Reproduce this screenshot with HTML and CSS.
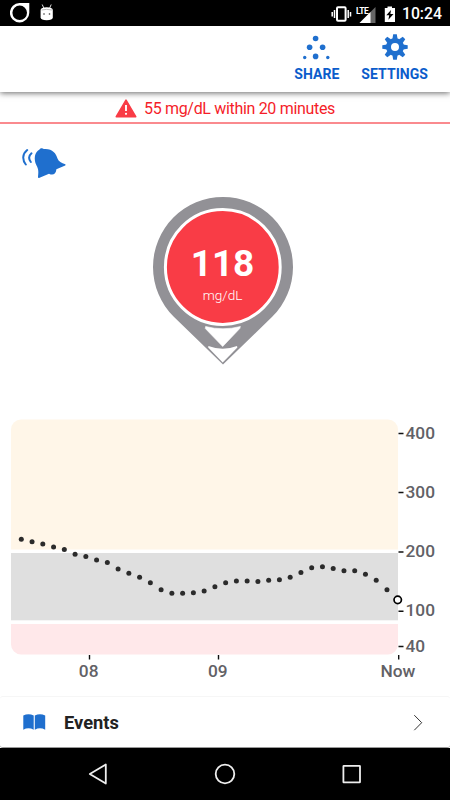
FILE: index.html
```html
<!DOCTYPE html>
<html lang="en">
<head>
  <title>Glucose Monitor</title>
  <meta charset="UTF-8" />
  <meta name="viewport" content="width=device-width, initial-scale=1" />
  <link rel="stylesheet" href="styles.css">
</head>
<body>
  <!-- Android status bar -->
  <div class="status-bar">
    <svg class="status-drop" width="20" height="20" viewBox="0 0 20 20">
      <path fill="#fff" fill-rule="evenodd" d="M9.8 0H19.3V9.7A9.7 9.7 0 1 1 9.8 0ZM9.7 2.5A7.3 7.3 0 1 0 9.7 17.1A7.3 7.3 0 1 0 9.7 2.5Z" />
    </svg>
    <svg class="status-droid" width="14" height="17" viewBox="0 0 14 17">
      <path d="M2.2 .5L3.8 4M11.2 .5L9.7 4" stroke="#ddd" stroke-width="1" />
      <path fill="#fff" d="M.6 6Q1 3.2 6.7 3.2T12.8 6V13.5Q12.5 16.2 6.7 16.2T.6 13.5Z" />
      <path d="M1.5 6Q6.7 4.7 12 6" fill="none" stroke="#bbb" stroke-width="1" />
      <circle cx="4" cy="10" r=".8" fill="#333" />
      <circle cx="9.5" cy="10" r=".8" fill="#333" />
    </svg>
    <div class="status-right">
      <svg width="21" height="16" viewBox="0 0 21 16">
        <rect x="6" y="1.2" width="8.6" height="13.6" rx="1" fill="none" stroke="#fff" stroke-width="2" />
        <path d="M3.5 4V12M17.2 4V12M1.2 6V10.5M19.5 6V10.5" stroke="#fff" stroke-width="1.5" />
      </svg>
      <svg class="signal" width="20" height="17" viewBox="0 0 20 17">
        <path fill="#666" d="M19.5 1V17H3.5Z" />
        <path fill="#fff" d="M14.5 6V17H3.5Z" />
        <path d="M0 0H11V9H0Z" />
        <text x="0" y="7.7">LTE</text>
      </svg>
      <svg class="battery" width="12" height="17" viewBox="0 0 12 17">
        <path fill="#fff" d="M3.5 .5H8V2H11V16H.8V2H3.5Z" />
        <path d="M7 4L2.3 9.3H5.2L4.4 13.7L9.5 8H6.4Z" />
      </svg>
      <span class="clock">10:24</span>
    </div>
  </div>

  <!-- Toolbar -->
  <header class="toolbar">
    <button class="tool share">
      <svg width="28" height="28" viewBox="0 0 28 28">
        <circle cx="12.6" cy="4.5" r="2.8" />
        <circle cx="6.6" cy="13.3" r="2.8" />
        <circle cx="19.6" cy="13.3" r="2.8" />
        <circle cx="12.6" cy="22.4" r="2.8" />
        <circle cx="1.7" cy="23.5" r="1.7" />
        <circle cx="24.8" cy="23.5" r="1.7" />
      </svg>
      SHARE
    </button>
    <button class="tool settings">
      <svg width="28" height="28" viewBox="-14 -13 28 28">
        <circle r="6.5" fill="none" stroke="#1f6fce" stroke-width="5" />
        <path id="tooth" d="M-2.6 -8L-1.8 -12.7H1.8L2.6 -8Z" />
        <use href="#tooth" transform="rotate(45)" />
        <use href="#tooth" transform="rotate(90)" />
        <use href="#tooth" transform="rotate(135)" />
        <use href="#tooth" transform="rotate(180)" />
        <use href="#tooth" transform="rotate(225)" />
        <use href="#tooth" transform="rotate(270)" />
        <use href="#tooth" transform="rotate(315)" />
      </svg>
      SETTINGS
    </button>
  </header>

  <div class="alert">
    <svg width="22" height="19" viewBox="0 0 22 19">
      <path fill="#f93c46" stroke="#f93c46" stroke-width="1.6" stroke-linejoin="round" d="M11 1.2L20.7 17.7H1.3Z" />
      <path d="M11 6V12" stroke="#fff" stroke-width="1.9" />
      <circle cx="11" cy="14.8" r="1.1" fill="#fff" />
    </svg>
    <span>55 mg/dL within 20 minutes</span>
  </div>

  <main class="reading">
    <svg class="bell" width="46" height="34" viewBox="0 0 46 34">
      <path fill="none" stroke="#1f6fce" stroke-width="2" stroke-linecap="round" d="M5.2 3C.2 7 .2 13 3.8 17.5M9.5 6.3C6.5 9 6.5 12 8.8 15" />
      <path fill="#1f6fce" d="M17.5 2.5C18.3 .8 20.8 .8 21.7 2C30 1.2 34 6 35.5 11.5C36.5 14.7 39.5 16 43.3 17.2Q44 18 43.2 18.6L34.4 22.3C34 26.8 31 29 27 26.7L17 31Q16 31.2 16 30C16.5 25.5 16.8 22.5 14.4 18.3C11.5 12 12.5 5 17.5 2.5Z" />
    </svg>

    <!-- Current value, pointer facing down -->
    <div class="pin">
      <svg width="140" height="168" viewBox="0 0 140 168">
        <path fill="#929196" d="M70 167.5L20.8 119.8A70 70 0 1 1 119.2 119.8Z" />
        <circle cx="69.8" cy="70" r="57.4" fill="#f93c46" stroke="#fff" stroke-width="3" />
        <path fill="#fff" d="M52.6 129.5Q70 134 87.4 129.5L86.8 131.5L69.7 149.5L52.3 131.5Z" stroke="#fff" stroke-width=".6" />
        <path fill="#fff" d="M55.4 149Q69.7 154.5 84 149L84.4 150.5L69.7 165.5L55.2 150.5Z" />
      </svg>
      <div class="pin-value">
        <strong>118</strong>
        <span>mg/dL</span>
      </div>
    </div>
  </main>

  <svg class="chart" width="450" height="286" viewBox="0 410 450 286">
    <path fill="#fff6e8" d="M11 549.5V429.5A10 10 0 0 1 21 419.5H388A10 10 0 0 1 398 429.5V549.5Z" />
    <rect x="11" y="553" width="387" height="67.3" fill="#dfdfdf" />
    <path fill="#ffe8ea" d="M11 624H398V644.5A10 10 0 0 1 388 654.5H21A10 10 0 0 1 11 644.5Z" />

    <path class="ticks" d="M398.5 433.5H403.5M398.5 492.5H403.5M398.5 552H403.5M398.5 611.3H403.5M398.5 646.5H403.5M89.5 655V659.5M218.5 655V659.5M398.7 655V659.5" />
    <g class="axis">
      <text x="405.5" y="438.5">400</text>
      <text x="405.5" y="497.5">300</text>
      <text x="405.5" y="556.7">200</text>
      <text x="405.5" y="616.2">100</text>
      <text x="405.5" y="651.5">40</text>
    </g>
    <g class="axis axis-time">
      <text x="88.7" y="677.3">08</text>
      <text x="217.8" y="677.3">09</text>
      <text x="398" y="677.3">Now</text>
    </g>
    <g id="points"></g>
  </svg>

  <a class="events">
    <svg width="23" height="17" viewBox="0 0 23 17">
      <path d="M.3 1.5Q5.5 -1 10.7 1.5V15.7Q5.5 13 .3 15.7ZM11.8 1.5Q17 -1 22.2 1.5V15.7Q17 13 11.8 15.7Z" fill="#1f6fce" />
    </svg>
    <span>Events</span>
    <svg class="chevron" width="10" height="18" viewBox="0 0 10 18">
      <path d="M1.3 2.2L8.7 9.7L1.3 17.2" fill="none" stroke="#333" stroke-width="1" />
    </svg>
  </a>

  <!-- Android navigation -->
  <nav class="nav-bar">
    <svg width="22" height="24" viewBox="0 0 22 24">
      <path d="M18.8 2.5V21.5L2.8 12Z" />
    </svg>
    <svg width="22" height="24" viewBox="0 0 22 24">
      <circle cx="11" cy="12" r="9.3" />
    </svg>
    <svg width="22" height="24" viewBox="0 0 22 24">
      <rect x="2.4" y="3.8" width="16.6" height="16.6" rx=".5" />
    </svg>
  </nav>

  <script>
    // One reading every five minutes, oldest first, in mg/dL
    const readings = [
      221, 217, 213, 208, 204, 196, 192, 186, 182, 171, 164, 157, 148, 136, 130,
      130, 131, 134, 141, 148, 151, 151, 150, 152, 153, 157, 165, 173, 175, 172,
      168, 168, 162, 152, 136, 119
    ];
    const points = document.getElementById('points');

    readings.forEach((value, i) => {
      const last = i === readings.length - 1;
      const dot = document.createElementNS('http://www.w3.org/2000/svg', 'circle');
      dot.setAttribute('cx', 21.3 + i * 10.755);
      dot.setAttribute('cy', 670.5 - value * 0.5935);
      dot.setAttribute('r', last ? 3.7 : 2.5);
      dot.setAttribute('class', last ? 'dot now' : 'dot');
      points.appendChild(dot);
    });
  </script>
</body>
</html>
```
FILE: styles.css
```css
* {
  box-sizing: border-box;
}

body {
  margin: 0;
  height: 800px;
  display: flex;
  flex-direction: column;
  overflow: hidden;
  background: #fff;
  font-family: Roboto, sans-serif;
}

svg {
  display: block;
  flex-shrink: 0;
}

.status-bar {
  height: 26px;
  flex-shrink: 0;
  display: flex;
  align-items: flex-start;
  background: #000;
  padding: 3px 8px 0 10px;
}

.status-droid {
  margin: 1px 0 0 10px;
}

.status-right {
  margin-left: auto;
  display: flex;
  align-items: center;
  padding-top: 2px;
}

.signal {
  margin-left: 4px;
}

.signal text {
  font-size: 8.5px;
  font-weight: 700;
  fill: #fff;
  letter-spacing: -0.5px;
}

.battery {
  margin-left: 8px;
}

.clock {
  margin-left: 6px;
  color: #fff;
  font-size: 15.8px;
  font-weight: 500;
  line-height: 18px;
}

.toolbar {
  position: relative;
  height: 66px;
  flex-shrink: 0;
  display: flex;
  justify-content: flex-end;
  gap: 22px;
  padding: 8px 22px 0 0;
  box-shadow: 0 1px 6px rgba(0, 0, 0, 0.6);
  clip-path: inset(0 0 -10px 0);
}

.tool {
  display: flex;
  flex-direction: column;
  align-items: center;
  gap: 4px;
  padding: 0;
  border: none;
  background: none;
  color: #0b5ccb;
  font: 700 14px/16px Roboto, sans-serif;
  letter-spacing: 0.05px;
}

.tool svg {
  fill: #1f6fce;
}

.alert {
  height: 32px;
  flex-shrink: 0;
  display: flex;
  align-items: center;
  justify-content: center;
  gap: 7px;
  padding-top: 3px;
  border-bottom: 2px solid #fa8a8e;
  color: #f51d29;
  font-size: 16px;
  letter-spacing: -0.32px;
}

.reading {
  height: 286px;
  flex-shrink: 0;
  display: flex;
  align-items: flex-start;
}

.bell {
  margin: 23px 0 0 22px;
}

.pin {
  position: relative;
  margin: 73px 0 0 84.5px;
}

.pin-value {
  position: absolute;
  top: 0;
  left: 0;
  width: 140px;
  padding-top: 46px;
  display: flex;
  flex-direction: column;
  align-items: center;
  color: #fff;
}

.pin-value strong {
  font-size: 37px;
  line-height: 42px;
}

.pin-value span {
  margin-top: 2px;
  font-size: 13.6px;
  font-weight: 300;
  line-height: 16px;
}

.ticks {
  stroke: #111;
  stroke-width: 1.4;
}

.axis {
  font-size: 17.3px;
  font-weight: 500;
  fill: #626166;
}

.axis-time {
  text-anchor: middle;
}

.dot {
  fill: #2b2b2b;
}

.dot.now {
  fill: #fff;
  stroke: #000;
  stroke-width: 1.7;
}

.events {
  height: 52px;
  flex-shrink: 0;
  display: flex;
  align-items: center;
  padding: 0 27px 0 23px;
  border-top: 1px solid #f6f6f6;
  border-bottom: 1px solid #999;
  border-radius: 3px;
  color: #222;
  font-size: 18.3px;
  font-weight: 700;
}

.events span {
  margin-left: 18px;
}

.chevron {
  margin-left: auto;
}

.nav-bar {
  flex: 1;
  display: flex;
  justify-content: center;
  align-items: center;
  gap: 105px;
  background: #000;
}

.nav-bar svg {
  fill: none;
  stroke: #eee;
  stroke-width: 1.8;
  stroke-linejoin: round;
}
```
